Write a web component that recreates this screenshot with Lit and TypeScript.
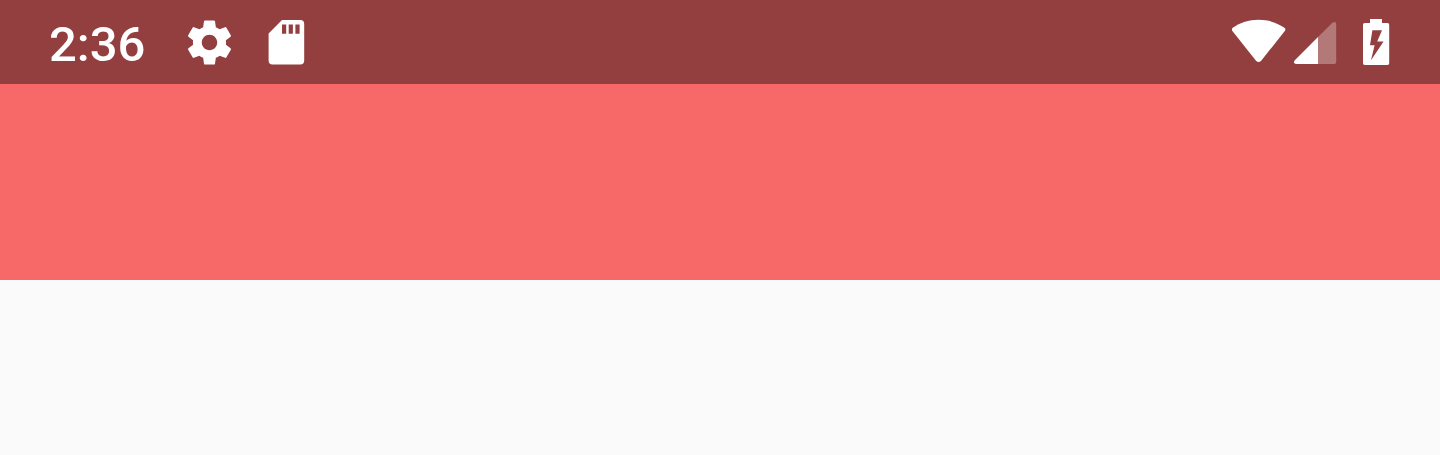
import { LitElement, html, css } from "lit";
import { customElement } from "lit/decorators.js";

@customElement("status-bar")
class StatusBar extends LitElement {
  static styles = css`
    :host {
      display: flex;
      align-items: center;
      justify-content: space-between;
      height: 84px;
      padding: 0 50px 0 49px;
      box-sizing: border-box;
      background: #933f40;
      color: #fff;
      font-family: Roboto, sans-serif;
    }
    .group {
      display: flex;
      align-items: center;
    }
    .time {
      font-size: 49px;
      line-height: 56px;
      font-weight: 500;
      padding-top: 6px;
    }
    .notifications {
      display: flex;
      gap: 24px;
      margin-left: 38px;
    }
    .signals {
      display: flex;
      gap: 8px;
      margin-right: 26px;
    }
    svg {
      display: block;
      fill: currentColor;
    }
    .dim {
      opacity: 0.3;
    }
  `;

  render() {
    return html`
      <div class="group">
        <time class="time">2:36</time>
        <div class="notifications">
          <svg width="53" height="53" viewBox="0 0 24 24" role="img" aria-label="Settings">
            <path
              d="M19.43 12.98c.04-.32.07-.64.07-.98s-.03-.66-.07-.98l2.11-1.65c.19-.15.24-.42.12-.64l-2-3.46c-.12-.22-.39-.3-.61-.22l-2.49 1c-.52-.4-1.08-.73-1.69-.98l-.38-2.65C14.46 2.18 14.25 2 14 2h-4c-.25 0-.46.18-.49.42l-.38 2.65c-.61.25-1.17.59-1.69.98l-2.49-1c-.23-.09-.49 0-.61.22l-2 3.46c-.13.22-.07.49.12.64l2.11 1.65c-.04.32-.07.65-.07.98s.03.66.07.98l-2.11 1.65c-.19.15-.24.42-.12.64l2 3.46c.12.22.39.3.61.22l2.49-1c.52.4 1.08.73 1.69.98l.38 2.65c.03.24.24.42.49.42h4c.25 0 .46-.18.49-.42l.38-2.65c.61-.25 1.17-.59 1.69-.98l2.49 1c.23.09.49 0 .61-.22l2-3.46c.12-.22.07-.49-.12-.64l-2.11-1.65zM12 15.5c-1.93 0-3.5-1.57-3.5-3.5s1.57-3.5 3.5-3.5 3.5 1.57 3.5 3.5-1.57 3.5-3.5 3.5z"
            />
          </svg>
          <svg width="53" height="53" viewBox="0 0 53 53" role="img" aria-label="SD card">
            <path
              fill-rule="evenodd"
              d="M22 4.1H40.3Q44.2 4.1 44.2 8V44.6Q44.2 48.5 40.3 48.5H12.5Q8.6 48.5 8.6 44.6V17.4ZM22 8.6V17.8H26.2V8.6ZM28.7 8.6V17.8H32.9V8.6ZM35.4 8.6V17.8H39.6V8.6Z"
            />
          </svg>
        </div>
      </div>
      <div class="group">
        <div class="signals">
          <svg width="54" height="46" viewBox="0 0 54 46" role="img" aria-label="Wi-Fi">
            <path
              d="M26.6 0.8C36.5 0.8 45 3.7 52.4 8.7Q54.1 10 52.8 12L29.2 41.7Q26.6 44.5 24 41.7L0.4 12Q-0.9 10 0.8 8.7C8.2 3.7 16.7 0.8 26.6 0.8Z"
            />
          </svg>
          <svg width="43" height="46" viewBox="0 0 43 46" role="img" aria-label="Mobile signal">
            <path d="M24 18V45H2.2Q-1.2 44.4 0.6 41.5Z" />
            <path class="dim" d="M24 18L38.4 3.7Q42 1.5 42.2 5.3V43Q42.2 45 40.2 45H24Z" />
          </svg>
        </div>
        <svg width="27" height="46" viewBox="0 0 27 46" role="img" aria-label="Battery charging">
          <path
            fill-rule="evenodd"
            d="M7 0H19V4H24.5Q26.2 4 26.2 5.8V44.2Q26.2 46 24.5 46H1.8Q0 46 0 44.2V5.8Q0 4 1.8 4H7ZM9.4 11.3L7 26.2H11.6L8 41.2L20.6 22.6H14.2L19 11.3Z"
          />
        </svg>
      </div>
    `;
  }
}

@customElement("app-root")
class AppRoot extends LitElement {
  static styles = css`
    :host {
      display: flex;
      flex-direction: column;
      min-height: 100vh;
      background: #fafafa;
    }
    .toolbar {
      height: 196px;
      background: #f66968;
    }
    .content {
      flex: 1;
    }
  `;

  render() {
    return html`
      <status-bar></status-bar>
      <header class="toolbar"></header>
      <main class="content"></main>
    `;
  }
}
